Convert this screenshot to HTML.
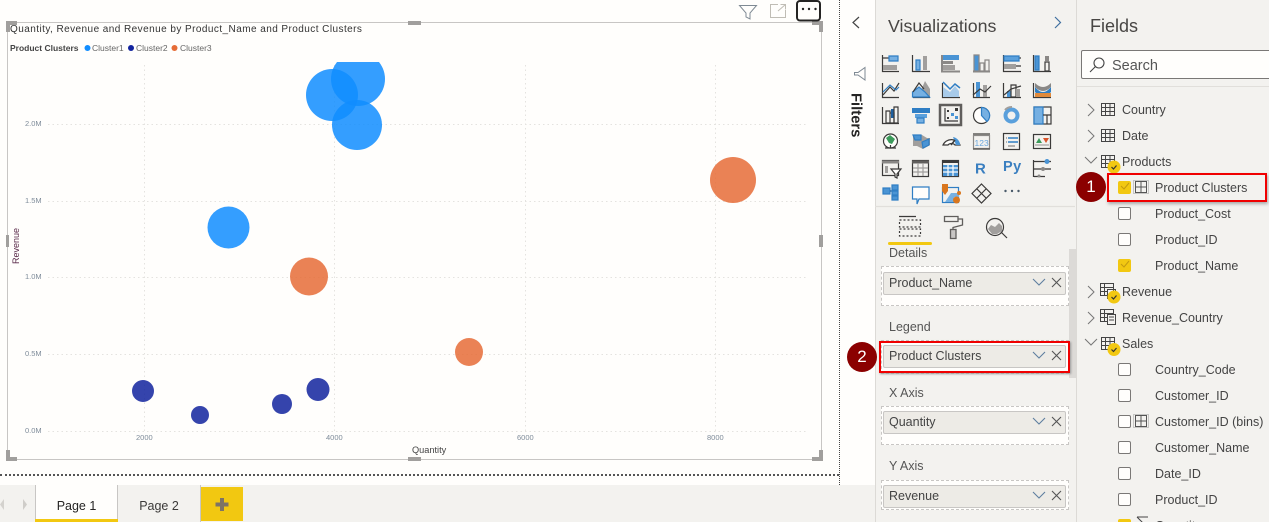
<!DOCTYPE html>
<html style="overflow:hidden;width:1269px;height:522px"><head><meta charset="utf-8">
<style>
html,body{margin:0;padding:0}
body{width:1269px;height:522px;overflow:hidden;position:relative;background:#f3f2ef;font-family:"Liberation Sans",sans-serif;color:#3b3a39}
#r{position:absolute;left:0;top:0;width:1269px;height:522px;overflow:hidden;background:#f3f2ef}
.a{position:absolute;white-space:nowrap}
.f{font-size:12.5px;line-height:16px;color:#444;left:1155px}
.h{font-size:12.5px;line-height:16px;color:#444;left:1122px}
.cb{position:absolute;left:1118px;width:11px;height:11px;border:1px solid #7a7876;border-radius:2px;background:#fffefc}
.cb.on{background:#f2c811;border-color:#f2c811}
.well{position:absolute;left:881px;width:188px;border:1px dashed #c8c6c4;background:#fffefc;box-sizing:border-box}
.pill{position:absolute;left:883px;width:183px;height:23px;background:#edebe6;border:1px solid #c8c6c4;border-radius:2px;box-sizing:border-box;font-size:12.5px;line-height:21px;padding-left:5px;color:#444}
.lbl{font-size:12.5px;color:#555;left:889px;line-height:16px}
.num{position:absolute;width:30px;height:30px;border-radius:50%;background:#8b0000;color:#fff;font-size:17px;line-height:30px;text-align:center}
</style></head><body><div id="r">
<div class="a" style="left:0;top:0;width:840px;height:485px;background:#fffefc"></div>
<div class="a" style="left:840px;top:0;width:35px;height:522px;background:#fffefc"></div>
<div class="a" style="left:875px;top:0;width:1px;height:522px;background:#dcdad6"></div>
<div class="a" style="left:1076px;top:0;width:1px;height:522px;background:#dcdad6"></div>
<div class="a" style="left:839px;top:0;height:485px;border-left:1px dotted #444"></div>
<div class="a" style="left:0;top:474px;width:839px;border-top:2px dotted #555"></div>

<svg class="a" style="left:0;top:0" width="840" height="485" viewBox="0 0 840 485">
<g stroke="#e4e3df" stroke-width="1" stroke-dasharray="1.5 3">
<path d="M48 124.500H808M48 201.500H808M48 277.500H808M48 354.500H808M48 431.500H808M144.500 65V431M334.500 65V431M525.500 65V431M715.500 65V431" fill="none"/>
</g>
<rect x="7.500" y="22.500" width="814" height="437" fill="none" stroke="#c8c6c4"/>
<g fill="#a19f9d">
<path d="M6 21H17V25H10V32H6ZM408 21H421V25H408ZM812 21H823V32H819V25H812ZM6 235H9V247H6ZM819 235H823V247H819ZM6 450H10V457H17V461H6ZM408 457H421V461H408ZM812 457H819V450H823V461H812Z"/>
</g>
<defs><clipPath id="c"><rect x="0" y="62" width="840" height="400"/></clipPath></defs>
<g clip-path="url(#c)" fill="#118dff" fill-opacity=".85">
<circle cx="358" cy="79" r="27"/><circle cx="332" cy="95" r="26"/><circle cx="357" cy="125" r="25"/><circle cx="228.500" cy="227.500" r="21"/>
</g>
<g fill="#e66c37" fill-opacity=".85">
<circle cx="733" cy="180" r="23"/><circle cx="309" cy="276.500" r="19"/><circle cx="469" cy="352" r="14"/>
</g>
<g fill="#12239e" fill-opacity=".85">
<circle cx="143" cy="391" r="11"/><circle cx="200" cy="415" r="9"/><circle cx="282" cy="404" r="10"/><circle cx="318" cy="389.500" r="11.500"/>
</g>
<circle cx="87.500" cy="48" r="3" fill="#118dff"/><circle cx="131" cy="48" r="3" fill="#12239e"/><circle cx="174.500" cy="48" r="3" fill="#e66c37"/>
<g fill="none">
<path d="M739.500 5.500H756.500L750 13V19L746 17V13Z" stroke="#7f8a94"/>
<path d="M785.500 10V17.500H770.500V4.500H778" stroke="#c0bdb5"/><path d="M778 11L785.500 4.500M780.500 4.500H785.500V9.500" stroke="#c0bdb5"/>
</g>
<rect x="797" y="1" width="23" height="19.500" rx="3" fill="#fffefc" stroke="#252423" stroke-width="2"/>
<g fill="#252423"><circle cx="803" cy="9" r="1.200"/><circle cx="809" cy="9" r="1.200"/><circle cx="815.500" cy="9" r="1.200"/></g>
</svg>

<div class="a" style="left:10px;top:23px;font-size:10px;line-height:13px;letter-spacing:.44px;color:#333">Quantity, Revenue and Revenue by Product_Name and Product Clusters</div>
<div class="a" style="left:10px;top:42px;font-size:8.500px;line-height:12px;font-weight:bold;color:#444">Product Clusters</div>
<div class="a" style="left:92px;top:42px;font-size:8.500px;line-height:12px;color:#666">Cluster1</div>
<div class="a" style="left:136px;top:42px;font-size:8.500px;line-height:12px;color:#666">Cluster2</div>
<div class="a" style="left:180px;top:42px;font-size:8.500px;line-height:12px;color:#666">Cluster3</div>
<div class="a" style="left:25px;top:119px;font-size:7.500px;line-height:10px;color:#7f8c9a">2.0M</div>
<div class="a" style="left:25px;top:196px;font-size:7.500px;line-height:10px;color:#7f8c9a">1.5M</div>
<div class="a" style="left:25px;top:272px;font-size:7.500px;line-height:10px;color:#7f8c9a">1.0M</div>
<div class="a" style="left:25px;top:349px;font-size:7.500px;line-height:10px;color:#7f8c9a">0.5M</div>
<div class="a" style="left:25px;top:426px;font-size:7.500px;line-height:10px;color:#7f8c9a">0.0M</div>
<div class="a" style="left:136px;top:433px;font-size:7.500px;line-height:10px;color:#7f8c9a">2000</div>
<div class="a" style="left:326px;top:433px;font-size:7.500px;line-height:10px;color:#7f8c9a">4000</div>
<div class="a" style="left:517px;top:433px;font-size:7.500px;line-height:10px;color:#7f8c9a">6000</div>
<div class="a" style="left:707px;top:433px;font-size:7.500px;line-height:10px;color:#7f8c9a">8000</div>
<div class="a" style="left:412px;top:445px;font-size:9.200px;line-height:11px;color:#444">Quantity</div>
<div class="a" style="left:11px;top:265px;font-size:9px;line-height:10px;color:#5a2a4a;transform:translate(-50%,-50%) rotate(-90deg);transform-origin:center;margin-left:5px;margin-top:-19px">Revenue</div>

<!-- tabs -->
<div class="a" style="left:0;top:485px;width:875px;height:37px;background:#f3f2ef"></div>
<div class="a" style="left:35px;top:485px;width:83px;height:37px;background:#fffefc;border-left:1px solid #c8c6c4;border-right:1px solid #c8c6c4;box-sizing:border-box;font-size:12.5px;line-height:42px;text-align:center;color:#252423">Page 1</div>
<div class="a" style="left:35px;top:519px;width:83px;height:3px;background:#f2c811"></div>
<div class="a" style="left:118px;top:485px;width:83px;height:37px;border-right:1px solid #c8c6c4;box-sizing:border-box;font-size:12.5px;line-height:42px;text-align:center;color:#3b3a39">Page 2</div>
<div class="a" style="left:201px;top:487px;width:42px;height:34px;background:#f2c811"></div>
<svg class="a" style="left:0;top:485px" width="250" height="37"><path d="M220 13H224V17.500H228.500V21.500H224V26H220V21.500H215.500V17.500H220Z" fill="#7d7466"/><path d="M4 14L0 19.500L4 25Z" fill="#d4d2ce"/><path d="M23 14L27 19.500L23 25Z" fill="#cfcdc9"/></svg>

<!-- filters -->
<svg class="a" style="left:845px;top:10px" width="30" height="80"><path d="M14 7L8 12.500L14 18" fill="none" stroke="#444" stroke-width="1.200"/><path d="M20 57.500V70L13 65H9.500V62.500H13Z" fill="none" stroke="#7f8a94"/></svg>
<div class="a" style="left:848px;top:93px;font-size:14.800px;line-height:18px;font-weight:bold;color:#252423;transform-origin:0 0;transform:translate(16.500px,0) rotate(90deg)">Filters</div>

<!-- viz header -->
<div class="a" style="left:888px;top:15px;font-size:17.800px;line-height:22px;color:#484644">Visualizations</div>
<svg class="a" style="left:1050px;top:14px" width="16" height="18"><path d="M5 3L10.500 8.500L5 14" fill="none" stroke="#3f6f9f" stroke-width="1.200"/></svg>
<div class="a" style="left:1090px;top:15px;font-size:18px;line-height:22px;color:#484644">Fields</div>
<div class="a" style="left:1081px;top:50px;width:200px;height:29px;background:#fffefc;border:1px solid #7a7876;border-radius:2px;box-sizing:border-box"></div>
<svg class="a" style="left:1088px;top:56px" width="20" height="18"><circle cx="11" cy="7" r="5" fill="none" stroke="#444" stroke-width="1.100"/><path d="M7.500 10.500L2 16" stroke="#444" stroke-width="1.100"/></svg>
<div class="a" style="left:1112px;top:58px;font-size:14.500px;line-height:17px;color:#555">Search</div>
<div class="a" style="left:1077px;top:86px;width:192px;height:1px;background:#e1dfdb"></div>

<!-- viz icons -->
<svg class="a" style="left:875px;top:45px" width="200" height="200" viewBox="0 0 200 200" fill="none" stroke-width="1.200">
<g stroke="#3b3a39">
<path d="M7.500 10V26.500H24M7.500 13H14M7.500 21H18"/><path d="M37.500 10V26.500H55"/><path d="M67 10V26.500H85" stroke-width="2" stroke="#8a8886"/><path d="M98 26.500H115" stroke="#8a8886" stroke-width="2"/><path d="M128.500 10V26.500H146M128.500 13H146M128.500 21H146"/><path d="M158.500 10V26.500H176"/>
<path d="M7.500 38V52.500H24"/><path d="M38 52.500H55"/><path d="M67.500 38V52.500H85"/><path d="M98.500 38V52.500H115"/><path d="M128.500 38V52.500H146"/><path d="M158.500 38V52.500H176"/>
<path d="M7.500 62V78.500H24"/>
</g>
<path d="M14 11H23V16H14Z" fill="#76b0e2" stroke="#2f7ec4"/><path d="M8 20H22V25H8Z" fill="#a19f9d"/>
<path d="M41 15H45V25H41Z" fill="#76b0e2" stroke="#2f7ec4"/><path d="M48 11H52V25H48Z" fill="#a19f9d"/>
<path d="M68 10H84V15H68Z" fill="#4a94d4"/><path d="M68 16H78V19H68Z" fill="#8a8886"/><path d="M68 20H80V25H68Z" fill="#a19f9d"/>
<path d="M99 10H104V26H99Z" fill="#4a94d4" stroke="#8a8886"/><path d="M105 18H109V26H105ZM110 15H114V26H110Z" stroke="#8a8886"/>
<path d="M129 11H144V16H129Z" fill="#5aa0dc" stroke="#2f7ec4"/><path d="M129 19H141V24H129Z" fill="#a19f9d"/>
<path d="M160 11H164V25H160Z" fill="#4a94d4" stroke="#2f7ec4"/><path d="M170 11H174V16H170Z" fill="#8a8886"/><path d="M170 17H174V26H170Z"  stroke="#3b3a39"/>

<path d="M8 50L15 42L19 46L24 38" stroke="#3b3a39"/><path d="M8 47L15 40L21 45L24 42" stroke="#2f7ec4"/>
<path d="M47 43L50 36L55 44V52H47Z" fill="#a19f9d"/><path d="M37.500 52V47L44 42L50 47L54.500 52Z" fill="#76b0e2" stroke="#2f7ec4"/><path d="M38 47L44 38L49 44" stroke="#3b3a39"/>
<path d="M68 42L75 47L80 41L84 46V52H68Z" fill="#a8cbea"/><path d="M68 37L75 44L80 39L85 43" stroke="#2f7ec4" stroke-width="1.500"/>
<path d="M101 37H105V52H101Z" fill="#4a94d4"/><path d="M108 40H112V52H108Z" fill="#a19f9d"/><path d="M98 50L105 44L110 47L116 41" stroke="#3b3a39"/>
<path d="M132 46H136V52H132Z" fill="#4a94d4"/><path d="M136 40H141V52H136Z" stroke="#3b3a39"/><path d="M141 44H145V52H141Z" fill="#a19f9d"/><path d="M129 50L136 44L146 41" stroke="#3b3a39"/>
<path d="M160 38Q168 46 176 38V42Q168 50 160 42Z" fill="#8a8886"/><path d="M160 42Q168 52 176 42V47Q168 56 160 47Z" fill="#2f7ec4"/><path d="M160 48H176V52H160Z" fill="#e08a3c"/>

<path d="M11 66H15V78H11ZM15 68H19V78H15Z" stroke="#3b3a39"/><path d="M16 64H19V73H16Z" fill="#1e5f9e"/><path d="M19 62H23V78H19Z" stroke="#3b3a39"/>
<path d="M37 63H55V68H37Z" fill="#2f7ec4"/><path d="M40 69H52V73H40Z" fill="#5aa0dc"/><path d="M42 73H49V78H42Z" fill="#76b0e2" stroke="#2f7ec4"/>
<rect x="65" y="60" width="21" height="20" fill="#f3f2ef" stroke="#605e5c" stroke-width="2.500"/>
<path d="M70 63V76H83" stroke="#3b3a39"/><g fill="#3b3a39"><rect x="72" y="65" width="2" height="2"/><rect x="80" y="63" width="3" height="3"/><rect x="72" y="72" width="2" height="2"/></g><g fill="#4a94d4"><rect x="76" y="68" width="3" height="3"/><rect x="80" y="71" width="3" height="3"/></g>
<circle cx="106.500" cy="70.500" r="8" fill="#fffefc" stroke="#3b3a39"/><path d="M106.500 62.500A8 8 0 0 1 112 76.500L106.500 70.500Z" fill="#76b0e2" stroke="#2f7ec4"/>
<circle cx="136.500" cy="70.500" r="6" fill="none" stroke="#5aa0dc" stroke-width="4"/><path d="M130 65A8.500 8.500 0 0 1 137 62" stroke="#a19f9d" stroke-width="2"/>
<rect x="159" y="62" width="17" height="17" stroke="#3b3a39"/><path d="M159 62H168V79H159Z" fill="#76b0e2" stroke="#2f7ec4"/><path d="M168 70H176M172 70V79" stroke="#3b3a39"/>

<circle cx="15.500" cy="96" r="7" fill="#fffefc" stroke="#3b3a39"/><path d="M11 93L15 90L20 94L17 99L14 98Z" fill="#3b9a5a"/><path d="M10 103H21M15.500 103V100" stroke="#3b3a39"/>
<path d="M38 90H47L52 93H55V100L48 104L42 101H38Z" fill="#a19f9d"/><path d="M38 90H46V95H40ZM47 97L54 94V100L48 103Z" fill="#4a94d4" stroke="#2f7ec4"/>
<path d="M68 100A9 8 0 0 1 85 100H80A4 3 0 0 0 73 100Z" fill="#fffefc" stroke="#3b3a39"/><path d="M78 92A9 8 0 0 1 85 100H81" fill="#4a94d4"/><path d="M76 100L80 95" stroke="#3b3a39" stroke-width="1.500"/>
<rect x="98.500" y="90.500" width="16" height="13" stroke="#8a8886"/><path d="M98 89H115M98 104H115" stroke="#605e5c" stroke-width="1.500"/><text x="99.500" y="101" font-size="8.500" font-family="Liberation Sans" fill="#6aa6dc" stroke="none">123</text>
<rect x="128.500" y="88.500" width="16" height="16" stroke="#3b3a39"/><path d="M133 93H143M133 97H143" stroke="#2f7ec4" stroke-width="1.500"/><path d="M131 93H132M131 97H132M133 101H140" stroke="#8a8886"/>
<rect x="158.500" y="89.500" width="17" height="14" stroke="#3b3a39"/><path d="M161 98L164 93L167 98Z" fill="#3b9a5a"/><path d="M168 93H174L171 98Z" fill="#d9542b"/><path d="M160 100H174" stroke="#a19f9d"/>

<rect x="7.500" y="115.500" width="16" height="15" stroke="#3b3a39"/><path d="M7 117H24" stroke="#8a8886" stroke-width="3"/><path d="M10 121H13V128H10Z" fill="#a19f9d"/><path d="M16 124H26L22 129V133L20 132V129Z" fill="#fffefc" stroke="#3b3a39"/>
<rect x="37.500" y="115.500" width="16" height="16" stroke="#3b3a39"/><path d="M37 117H54" stroke="#605e5c" stroke-width="3"/><path d="M38 123H53M38 127H53" stroke="#a19f9d"/><path d="M43 118V131M48 118V131" stroke="#a19f9d"/>
<rect x="67.500" y="115.500" width="16" height="16" stroke="#3b3a39"/><path d="M68 120H83V131H68Z" fill="#4a94d4"/><path d="M68 123H83M68 127H83M73 120V131M78 120V131" stroke="#fffefc"/><path d="M67 117H84" stroke="#3b3a39" stroke-width="2"/>
<text x="100" y="128.500" font-size="15" font-weight="bold" font-family="Liberation Sans" fill="#3a7fc0" stroke="none">R</text>
<text x="128" y="126" font-size="14.500" font-weight="bold" letter-spacing=".5" font-family="Liberation Sans" fill="#3a7fc0" stroke="none">Py</text>
<path d="M159 116.500H176M159 124H176M159 131.500H170" stroke="#3b3a39"/><path d="M158.500 115V132" stroke="#3b3a39"/><circle cx="172" cy="116.500" r="2.500" fill="#4a94d4"/><circle cx="168" cy="124" r="2" fill="#8a8886"/><circle cx="164" cy="131" r="1.500" fill="#8a8886"/>

<rect x="8" y="143" width="7" height="6" fill="#4a94d4" stroke="#2f7ec4"/><path d="M15 146H18M18 143V150"  stroke="#1e5f9e"/><path d="M17 140H23V145H17ZM17 146H23V150H17ZM17 151H23V155H17Z" fill="#4a94d4" stroke="#2f7ec4"/>
<path d="M37.500 142H54V154H44L42 159V154H37.500Z" fill="#fffefc" stroke="#2f7ec4" stroke-width="1.200"/>
<rect x="67.500" y="142.500" width="16" height="15" stroke="#2f7ec4"/><path d="M70 157L76 148H84V152H79V157Z" fill="#76b0e2"/><path d="M67 139H73V146L70 150L67 146Z" fill="#d9761e"/><circle cx="81.500" cy="155" r="3.500" fill="#d9761e"/><circle cx="84" cy="148" r="2" fill="#d9761e"/>
<path d="M106.500 139L116 148.500L106.500 158L97 148.500ZM102 144L111 153M111 144L102 153" stroke="#3b3a39"/>
<g fill="#4a5a6a" stroke="none"><circle cx="130.500" cy="146" r="1.200"/><circle cx="137" cy="146" r="1.200"/><circle cx="143.500" cy="146" r="1.200"/></g>
</g>
<path d="M0 161.500H200" stroke="#e1dfdb"/>
<path d="M24 171.500H41" stroke="#3b3a39" stroke-width="1.200"/><path d="M24.500 175H45.500V182H24.500ZM24.500 184H45.500V191H24.500Z" stroke="#3b3a39" stroke-dasharray="2 2"/>
<path d="M69.500 171.500H83V176.500H69.500Z" fill="#f3f2ef" stroke="#605e5c" stroke-width="1.300"/><path d="M83 174H87.500V180L78 182.500V185" stroke="#605e5c" stroke-width="1.300"/><rect x="75.500" y="184.500" width="5.500" height="9" fill="#c8c6c4" stroke="#605e5c" stroke-width="1.300"/>
<circle cx="120" cy="182" r="8.500" stroke="#3b3a39" stroke-width="1.200"/><path d="M113 184L116 180L120 182L124 178L127 181V186L122 189H117Z" fill="#a19f9d"/><path d="M126 187L132 193" stroke="#3b3a39" stroke-width="1.200"/>
</svg>
<div class="a" style="left:888px;top:242px;width:44px;height:3px;background:#f2c811;border-radius:2px"></div>

<!-- scrollbars -->
<div class="a" style="left:1069px;top:249px;width:7px;height:129px;background:#dcdad7"></div>

<!-- wells -->
<div class="a lbl" style="top:245px">Details</div>
<div class="well" style="top:266px;height:40px"></div>
<div class="pill" style="top:272px">Product_Name</div>
<div class="a lbl" style="top:319px">Legend</div>
<div class="well" style="top:340px;height:34px"></div>
<div class="pill" style="top:345px">Product Clusters</div>
<div class="a" style="left:879px;top:341px;width:187px;height:28px;border:2px solid #f00000;box-shadow:1px 1px 2px #999"></div>
<div class="a lbl" style="top:385px">X Axis</div>
<div class="well" style="top:406px;height:39px"></div>
<div class="pill" style="top:411px">Quantity</div>
<div class="a lbl" style="top:458px">Y Axis</div>
<div class="well" style="top:480px;height:30px"></div>
<div class="pill" style="top:485px">Revenue</div>
<svg class="a" style="left:1030px;top:270px" width="36" height="240" fill="none" stroke-width="1.100">
<g><path d="M3 9L9 15L15 9" stroke="#5f7f9f"/><path d="M22 8L31 17M31 8L22 17" stroke="#555"/></g>
<g transform="translate(0,73)"><path d="M3 9L9 15L15 9" stroke="#5f7f9f"/><path d="M22 8L31 17M31 8L22 17" stroke="#555"/></g>
<g transform="translate(0,139)"><path d="M3 9L9 15L15 9" stroke="#5f7f9f"/><path d="M22 8L31 17M31 8L22 17" stroke="#555"/></g>
<g transform="translate(0,213)"><path d="M3 9L9 15L15 9" stroke="#5f7f9f"/><path d="M22 8L31 17M31 8L22 17" stroke="#555"/></g>
</svg>
<div class="num" style="left:847px;top:342px">2</div>

<!-- fields -->
<div class="a h" style="top:102px">Country</div>
<div class="a h" style="top:128px">Date</div>
<div class="a h" style="top:154px">Products</div>
<div class="a h" style="top:284px">Revenue</div>
<div class="a h" style="top:310px">Revenue_Country</div>
<div class="a h" style="top:336px">Sales</div>
<div class="a f" style="top:180px">Product Clusters</div>
<div class="a f" style="top:206px">Product_Cost</div>
<div class="a f" style="top:232px">Product_ID</div>
<div class="a f" style="top:258px">Product_Name</div>
<div class="a f" style="top:362px">Country_Code</div>
<div class="a f" style="top:388px">Customer_ID</div>
<div class="a f" style="top:414px">Customer_ID (bins)</div>
<div class="a f" style="top:440px">Customer_Name</div>
<div class="a f" style="top:466px">Date_ID</div>
<div class="a f" style="top:492px">Product_ID</div>
<div class="a f" style="top:518px">Quantity</div>
<div class="cb on" style="top:181px"></div><div class="cb" style="top:207px"></div><div class="cb" style="top:233px"></div><div class="cb on" style="top:259px"></div>
<div class="cb" style="top:363px"></div><div class="cb" style="top:389px"></div><div class="cb" style="top:415px"></div><div class="cb" style="top:441px"></div><div class="cb" style="top:467px"></div><div class="cb" style="top:493px"></div><div class="cb on" style="top:519px"></div>
<svg class="a" style="left:1077px;top:90px" width="192" height="432" fill="none" stroke-width="1">
<g stroke="#777">
<path d="M11 14L17 20L11 26M11 40L17 46L11 52M8 67L14 73L20 67M11 196L17 202L11 208M11 222L17 228L11 234M8 249L14 255L20 249"/>
</g>
<g stroke="#444">
<path d="M24.500 13.500H37.500V25.500H24.500ZM24.500 17.500H37.500M24.500 21.500H37.500M28.500 13.500V25.500M33 13.500V25.500"/>
<path d="M24.500 39.500H37.500V51.500H24.500ZM24.500 43.500H37.500M24.500 47.500H37.500M28.500 39.500V51.500M33 39.500V51.500"/>
<path d="M24.500 65.500H37.500V77.500H24.500ZM24.500 69.500H37.500M24.500 73.500H37.500M28.500 65.500V77.500M33 65.500V77.500"/>
<path d="M23.500 193.500H36.500V205.500H23.500ZM23.500 197.500H36.500M23.500 201.500H30M27.500 193.500V205.500"/><rect x="30.500" y="199.500" width="8" height="9"/>
<path d="M23.500 219.500H36.500V231.500H23.500ZM23.500 223.500H36.500M23.500 227.500H30M27.500 219.500V231.500"/><rect x="30.500" y="224.500" width="8" height="10" fill="#f3f2ef"/><path d="M32 227H37M32 230H37" />
<path d="M24.500 247.500H37.500V259.500H24.500ZM24.500 251.500H37.500M24.500 255.500H37.500M28.500 247.500V259.500M33 247.500V259.500"/>
</g>
<g fill="#f2c811"><circle cx="37" cy="77" r="6.500"/><circle cx="37" cy="207" r="6.500"/><circle cx="37" cy="259.500" r="6.500"/></g>
<g stroke="#333" stroke-width="1.200"><path d="M34.500 77L36.500 79L39.500 75.500M34.500 207L36.500 209L39.500 205.500M34.500 259.500L36.500 261.500L39.500 258"/></g>
<path d="M44 96L47 99L52 93M44 174L47 177L52 171" stroke="#c49a10"/>
<rect x="56.500" y="90.500" width="15" height="13" stroke="#999" stroke-dasharray="1 1"/><path d="M58.500 91.500H69.500V102.500H58.500ZM58.500 97H69.500M64 91.500V102.500" stroke="#555"/>
<rect x="56.500" y="324.500" width="15" height="13" stroke="#999" stroke-dasharray="1 1"/><path d="M58.500 325.500H69.500V336.500H58.500ZM58.500 331H69.500M64 325.500V336.500" stroke="#555"/>
<path d="M60 427H71M60 427L65 432L60 437H70" stroke="#444"/>
</svg>
<div class="a" style="left:1107px;top:173px;width:156px;height:25px;border:2px solid #f00000;box-shadow:1px 2px 3px #aaa"></div>
<div class="num" style="left:1076px;top:172px">1</div>
</div></body></html>
